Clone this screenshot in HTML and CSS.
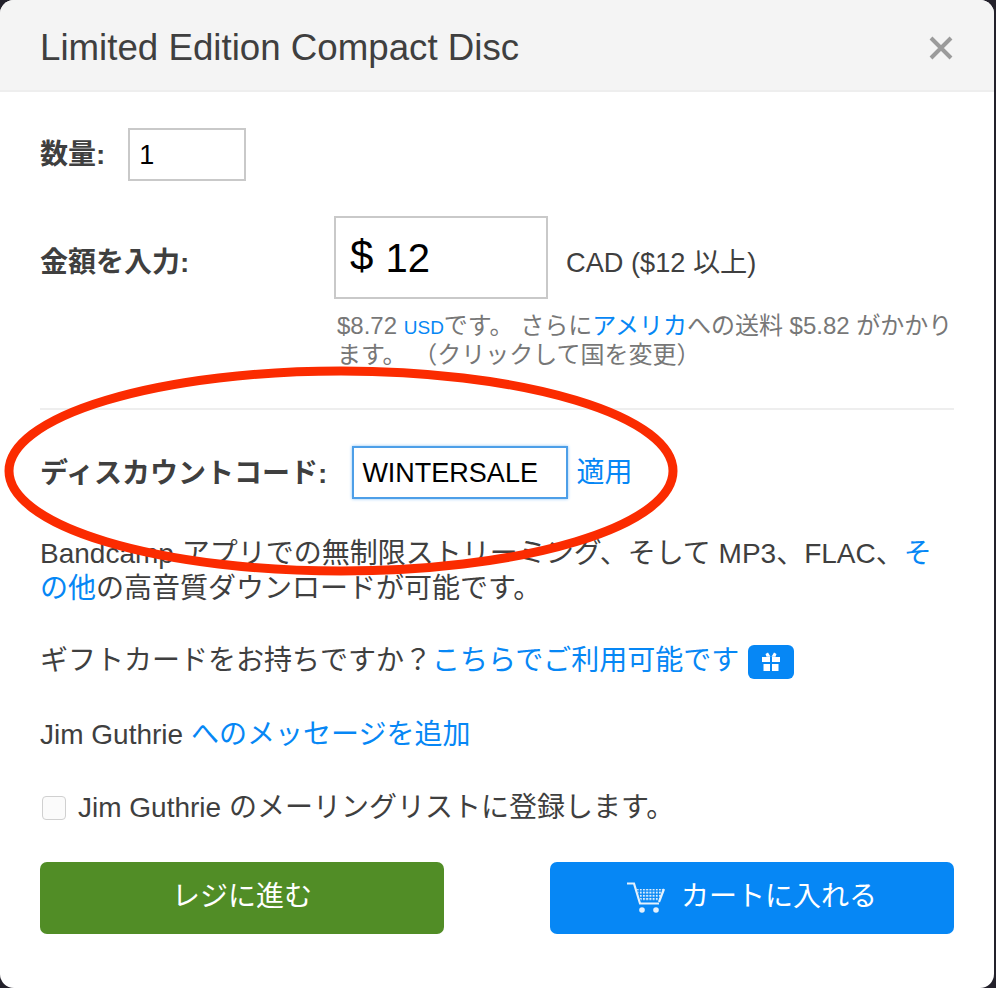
FILE: index.html
```html
<!DOCTYPE html>
<html lang="ja">
<head>
<meta charset="utf-8">
<title>Limited Edition Compact Disc</title>
<link rel="stylesheet" href="styles.css">
</head>
<body>
<div class="modal">
  <header class="head">
    <h1 class="title">Limited Edition Compact Disc</h1>
    <svg class="close" width="26" height="26" viewBox="0 0 26 26" aria-hidden="true"><path d="M3 3 L23 23 M23 3 L3 23" fill="none" stroke="#9b9b9b" stroke-width="4"/></svg>
  </header>
  <div class="body">
    <div class="row qty">
      <span class="label">数量:</span>
      <span class="field field-qty">1</span>
    </div>
    <div class="row amount">
      <span class="label label-amount">金額を入力:</span>
      <span class="field field-amount"><span class="cur">$</span> 12</span>
      <span class="cad">CAD ($12 以上)</span>
    </div>
    <p class="note">$8.72 <a class="small">USD</a>です。 さらに<a>アメリカ</a>への送料 $5.82 がかかります。 （クリックして国を変更）</p>
    <hr class="rule">
    <div class="row discount">
      <span class="label label-code">ディスカウントコード:</span>
      <span class="field field-code">WINTERSALE</span>
      <a>適用</a>
    </div>
    <p class="para para-app">Bandcamp アプリでの無制限ストリーミング、そして MP3、FLAC、<a>その他</a>の高音質ダウンロードが可能です。</p>
    <p class="para para-gift">ギフトカードをお持ちですか？<a>こちらでご利用可能です</a>
      <span class="gift"><svg width="20" height="20" viewBox="0 0 20 20" aria-hidden="true"><path fill="#fff" d="M1 5h8v5H1zM11 5h8v5h-8zM2.500 12H9v7H2.500zM11 12h6.500v7H11zM9.500 4.800 7 .5 4.500 2l1 2.800zM10.500 4.800 13 .5l2.500 1.500-1 2.800z"/></svg></span></p>
    <p class="para para-msg">Jim Guthrie <a>へのメッセージを追加</a></p>
    <div class="row check">
      <span class="box"></span>
      <span>Jim Guthrie のメーリングリストに登録します。</span>
    </div>
    <div class="actions">
      <button class="btn btn-green">レジに進む</button>
      <button class="btn btn-blue">
        <svg class="cart" width="38" height="31" viewBox="0 0 38 31" aria-hidden="true">
          <defs>
            <pattern id="dots" width="3.200" height="3.200" patternUnits="userSpaceOnUse">
              <rect width="2" height="2" fill="#dcecfb"/>
            </pattern>
          </defs>
          <path d="M10 7h27l-4.500 12H14z" fill="url(#dots)"/>
          <path d="M0 1.500h7l6 20h19" fill="none" stroke="#e4f1fc" stroke-width="2.200"/>
          <path d="M37 7l-5 13" fill="none" stroke="#e4f1fc" stroke-width="2.200"/>
          <circle cx="15" cy="28" r="2.800" fill="#e4f1fc"/><circle cx="29" cy="28" r="2.800" fill="#e4f1fc"/>
        </svg>
        <span>カートに入れる</span>
      </button>
    </div>
  </div>
  <svg class="circle" width="996" height="988" viewBox="0 0 996 988" aria-hidden="true">
    <ellipse cx="341" cy="471" rx="332" ry="100" fill="none" stroke="#fb2b00" stroke-width="9"/>
  </svg>
</div>
</body>
</html>
```
FILE: styles.css
```css
* { box-sizing: border-box; }
html, body { margin: 0; height: 100%; }
body {
  background: #23212b;
  font-family: "Liberation Sans", "Noto Sans CJK JP", sans-serif;
  font-size: 28px;
  line-height: 36px;
  color: #3f3f3f;
  overflow: hidden;
}
.modal {
  position: relative;
  width: 994px;
  height: 988px;
  background: #fff;
  border-radius: 14px;
  overflow: hidden;
}
.head {
  height: 92px;
  background: #f4f4f4;
  border-bottom: 2px solid #eeeeee;
  padding: 6px 40px 0 40px;
  display: flex;
  align-items: center;
  justify-content: space-between;
}
.title { margin: 0; font-size: 36.7px; line-height: 44px; font-weight: 400; color: #3f3f3f; }
.body { padding: 0 40px 0 40px; }
a { color: #0687f5; }
.row { display: flex; align-items: center; }
.label { font-weight: 700; color: #3f3f3f; }
.label-code { padding-top: 2px; }
.field {
  display: flex;
  align-items: center;
  background: #fff;
  border: 2px solid #c9c9c9;
  color: #000;
  font-size: 27px;
}
.qty { margin-top: 36px; gap: 23px; }
.field-qty { width: 118px; height: 53px; padding-left: 9px; }
.amount { margin-top: 35px; }
.label-amount { width: 294px; padding-top: 11px; }
.field-amount { width: 214px; height: 83px; padding-left: 14px; font-size: 40px; white-space: pre; }
.cur { font-size: 42px; margin: -4px 1px 0 0; }
.cad { margin-left: 18px; padding-top: 11px; font-size: 27.2px; }
.note {
  margin: 12px 0 0 297px;
  font-size: 24px;
  line-height: 29px;
  color: #777;
}
.small { font-size: 19px; line-height: 0; }
.rule { margin: 39px 0 0; border: 0; border-top: 2px solid #eee; }
.discount { margin-top: 36px; }
.field-code {
  width: 216px;
  height: 53px;
  margin: 0 8px 0 25px;
  padding-left: 8px;
  border-color: #4d9fe8;
  box-shadow: 0 0 3px #8cc4f5;
}
.para { margin: 0; line-height: 35px; }
.para-app { margin-top: 37px; }
.para-gift { margin-top: 37px; }
.para-msg { margin-top: 38px; }
.gift {
  display: inline-flex;
  align-items: center;
  justify-content: center;
  width: 46px;
  height: 34px;
  margin-left: 1px;
  vertical-align: -2px;
  background: #0687f5;
  border-radius: 6px;
}
.check { margin-top: 38px; gap: 12px; }
.box {
  width: 24px;
  height: 24px;
  margin-left: 2px;
  border: 1px solid #d0d0d0;
  border-radius: 4px;
  background: #fbfbfb;
}
.actions { margin-top: 36px; display: flex; justify-content: space-between; }
.btn {
  width: 404px;
  height: 72px;
  padding: 0 0 2px;
  border: 0;
  border-radius: 7px;
  color: #fff;
  font: inherit;
  display: flex;
  align-items: center;
  justify-content: center;
  gap: 16px;
}
.btn-green { background: #518d26; }
.btn-blue { background: #0687f5; }
.circle { position: absolute; left: 0; top: 0; pointer-events: none; }
```
